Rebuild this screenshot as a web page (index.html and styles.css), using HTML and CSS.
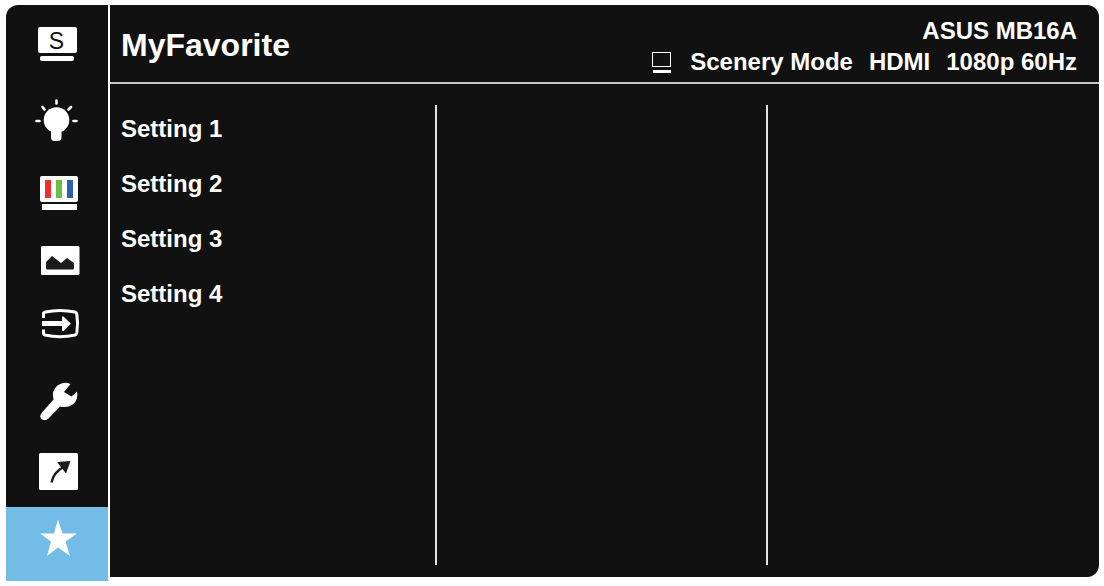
FILE: index.html
```html
<!DOCTYPE html>
<html lang="en">
<head>
<meta charset="utf-8">
<meta name="viewport" content="width=device-width, initial-scale=1">
<title>MyFavorite</title>
<link rel="stylesheet" href="styles.css">
</head>
<body>
<div class="osd">
  <nav class="sidebar" aria-label="Main menu">
    <button class="tab" type="button" aria-label="Splendid">
      <svg class="icon" width="102" height="72" viewBox="0 0 102 72">
        <rect x="32" y="22" width="39" height="26" rx="2"/>
        <rect x="34" y="51" width="34" height="5" rx="2"/>
        <text class="icon-letter" x="50.5" y="44" text-anchor="middle">S</text>
      </svg>
    </button>
    <button class="tab" type="button" aria-label="Blue light filter">
      <svg class="icon" width="102" height="72" viewBox="0 0 102 72">
        <circle cx="50.500" cy="43" r="12.800"/>
        <path d="M44 50h12.500l-1 4v6q0 4-3.500 4h-3.500q-3.500 0-3.500-4v-6z"/>
        <path class="stroke round" d="M50.500 23.500v3M36.500 30l2 2.500M65 30l-2.500 2.500M30.500 44h3M67.500 44h3"/>
      </svg>
    </button>
    <button class="tab" type="button" aria-label="Color">
      <svg class="icon" width="102" height="72" viewBox="0 0 102 72">
        <rect x="34" y="27" width="38" height="26" rx="2"/>
        <rect x="36" y="55" width="35" height="6"/>
        <rect class="red" x="39" y="31" width="6" height="18"/>
        <rect class="green" x="50" y="31" width="6" height="18"/>
        <rect class="blue" x="61" y="31" width="6" height="18"/>
      </svg>
    </button>
    <button class="tab" type="button" aria-label="Image">
      <svg class="icon" width="102" height="72" viewBox="0 0 102 72">
        <rect x="35" y="25" width="38.500" height="29" rx="1.500"/>
        <path class="ink" d="M40 41l6-6 9 7 6-5 7 5v5.500l-1 1H41l-1-1z"/>
      </svg>
    </button>
    <button class="tab" type="button" aria-label="Input select">
      <svg class="icon" width="102" height="72" viewBox="0 0 102 72">
        <path class="stroke frame" d="M37.500 25v-4.500q0-1 2-1.500Q54 15.800 69 19q1.500.5 1.800 2 1.500 9.500 0 19-.3 1.500-1.800 2Q54 45.500 39 42q-1.500-.5-1.500-1.500V36.500"/>
        <path d="M36 28h20v-4.500h1.500l7.500 7.200-7.500 7.300H56v-5H36z"/>
      </svg>
    </button>
    <button class="tab" type="button" aria-label="System setup">
      <svg class="icon" width="102" height="72" viewBox="0 0 102 72">
        <path d="M64.500 19Q58 16 51.500 20.500 45 26 47.500 34.500L36 47.500q-3.500 4.500 0 7 3.500 2 6.500-1L54 41.500q8 2 14-3 4.500-5 3-12L65.500 31.500 58 27z"/>
      </svg>
    </button>
    <button class="tab" type="button" aria-label="Shortcut">
      <svg class="icon" width="102" height="70" viewBox="0 0 102 70">
        <rect x="33" y="16" width="39" height="37" rx="1.500"/>
        <path class="curve" d="M45.500 45.500Q47.500 35 58.500 29.500"/>
        <path class="ink" d="M51 25l13.500-1L60 36.500z"/>
      </svg>
    </button>
    <button class="tab tab-active" type="button" aria-label="MyFavorite" aria-current="page">
      <svg class="icon" width="102" height="74" viewBox="0 0 102 74">
        <path d="M52 12.500L56.500 26.500H71L59.500 34.500 64 49 52 40.500 41 49l4-14.500L34 26.500h14z"/>
      </svg>
    </button>
  </nav>
  <main class="panel">
    <header class="header">
      <h1 class="title">MyFavorite</h1>
      <div class="status">
        <div class="model">ASUS MB16A</div>
        <div class="mode">
          <svg class="mode-icon" width="20" height="22" viewBox="0 0 20 22" aria-hidden="true">
            <rect class="screen" x="0.500" y="0.500" width="18" height="14"/>
            <rect x="1" y="18" width="18" height="3"/>
          </svg>
          <span>Scenery Mode</span>
          <span>HDMI</span>
          <span>1080p 60Hz</span>
        </div>
      </div>
    </header>
    <div class="columns">
      <div class="column">
        <button class="setting" type="button">Setting 1</button>
        <button class="setting" type="button">Setting 2</button>
        <button class="setting" type="button">Setting 3</button>
        <button class="setting" type="button">Setting 4</button>
      </div>
      <div class="column"></div>
      <div class="column"></div>
    </div>
  </main>
</div>
</body>
</html>
```
FILE: styles.css
```css
* {
  box-sizing: border-box;
}

body {
  margin: 0;
  background: #fff;
  color: #fff;
  font-family: "Liberation Sans", Arial, sans-serif;
  font-weight: bold;
}

button {
  margin: 0;
  padding: 0;
  border: 0;
  background: none;
  color: inherit;
  font: inherit;
}

.osd {
  display: flex;
  gap: 2px;
  min-height: 100vh;
  padding: 5px 5px 5px 6px;
}

.sidebar {
  display: grid;
  grid-template-rows: repeat(6, 72px) 70px 1fr;
  width: 102px;
  overflow: hidden;
  border-radius: 12px 0 0 0;
  background: #111;
}

.tab {
  display: flex;
}

.tab-active {
  background: #74bce8;
}

.icon,
.mode-icon {
  display: block;
  fill: #fff;
}

.icon-letter {
  fill: #111;
  font-size: 23px;
  font-weight: normal;
}

.stroke {
  fill: none;
  stroke: #fff;
}

.round {
  stroke-linecap: round;
  stroke-width: 2.6;
}

.frame {
  stroke-width: 3;
}

.curve {
  fill: none;
  stroke: #1c1a1b;
  stroke-width: 2.4;
}

.ink {
  fill: #1c1a1b;
}

.red {
  fill: #ee2f2b;
}

.green {
  fill: #6cbd45;
}

.blue {
  fill: #2f5faf;
}

.panel {
  display: flex;
  flex: 1;
  flex-direction: column;
  margin-bottom: 4px;
  border-radius: 0 12px 12px 0;
  background: #111;
}

.header {
  display: flex;
  justify-content: space-between;
  padding: 10px 22px 5px 11px;
  border-bottom: 2px solid #c8c6c4;
}

.title {
  margin: 0;
  padding-top: 12px;
  font-size: 32px;
  line-height: 36px;
}

.status {
  font-size: 24px;
  line-height: 31px;
  text-align: right;
}

.mode {
  display: flex;
  justify-content: flex-end;
  gap: 16px;
}

.mode-icon {
  margin: 6px 2px 0 0;
}

.screen {
  fill: none;
  stroke: #fff;
}

.columns {
  display: grid;
  flex: 1;
  grid-template-columns: 327px 1fr 1fr;
  padding: 21px 0 12px;
}

.column {
  display: flex;
  flex-direction: column;
  align-items: flex-start;
  gap: 26px;
  padding: 9px 11px;
  border-right: 2px solid #e4e4e4;
}

.column:last-child {
  border-right: 0;
}

.setting {
  font-size: 24px;
  line-height: 29px;
}
```
